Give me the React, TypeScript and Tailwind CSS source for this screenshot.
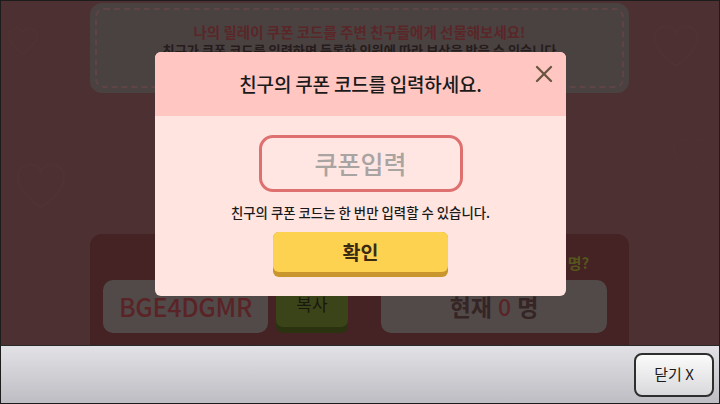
import { X } from 'lucide-react';

const Heart = ({ className }: { className: string }) => (
  <svg viewBox="0 0 60 56" className={className} fill="none" stroke="#5a3a3b" strokeWidth="3">
    <path d="M30 52 C10 38 4 28 4 18 C4 9 11 4 18 4 C24 4 28 8 30 12 C32 8 36 4 42 4 C49 4 56 9 56 18 C56 28 50 38 30 52 Z" />
  </svg>
);

export default function App() {
  return (
    <div
      className="w-[720px] h-[404px] flex flex-col overflow-hidden border border-[#1c1c1c] bg-[#4d3031]"
      style={{ fontFamily: '"Noto Sans CJK KR", "Noto Sans", sans-serif' }}
    >
      {/* 배경 (딤 처리된 화면) */}
      <div className="relative flex-1 overflow-hidden">
        <Heart className="absolute left-[6px] top-[14px] w-[32px] h-[52px] opacity-25" />
        <Heart className="absolute left-[10px] top-[160px] w-[60px] h-[50px] opacity-20" />
        <Heart className="absolute right-[18px] top-[22px] w-[50px] h-[46px] opacity-20" />
        <Heart className="absolute right-[8px] top-[130px] w-[40px] h-[50px] opacity-15" />

        <div className="flex flex-col items-start pl-[89px] pt-[2px]">
          {/* 상단 안내 박스 */}
          <div className="w-[539px] h-[90px] rounded-[12px] bg-[#4a4241] p-[5px]">
            <div className="h-full rounded-[9px] border-2 border-dashed border-[#5e4445] flex flex-col items-center pt-[11px]">
              <p className="text-[14.5px] font-bold text-[#5a2628] leading-[21px]">
                나의 릴레이 쿠폰 코드를 주변 친구들에게 선물해보세요!
              </p>
              <p className="text-[13.2px] font-bold text-[#261c1c] leading-[18px]">
                친구가 쿠폰 코드를 입력하면 등록한 인원에 따라 보상을 받을 수 있습니다
              </p>
            </div>
          </div>

          {/* 하단 코드 박스 */}
          <div className="mt-[141px] w-[539px] h-[130px] rounded-[12px] bg-[#452223] flex pl-[13px] pt-[20px] gap-[33px]">
            <div className="flex flex-col items-center gap-[8px]">
              <p className="text-[15px] font-bold text-[#6a5e5e] leading-[18px]">나의 릴레이 쿠폰 코드</p>
              <div className="flex gap-[8px]">
                <div className="w-[165px] h-[53px] rounded-[10px] bg-[#524a49] flex items-center justify-center text-[25px] font-medium text-[#5a2427] tracking-[-0.3px]">
                  BGE4DGMR
                </div>
                <div className="w-[72px] h-[53px] rounded-[7px] bg-[#2b3210] pb-[6px]">
                  <div className="h-full rounded-[7px] bg-[#3b4419] flex items-center justify-center text-[17px] text-[#18180c]">
                    복사
                  </div>
                </div>
              </div>
            </div>
            <div className="flex flex-col items-center gap-[8px]">
              <p className="text-[15px] font-bold text-[#55561d] leading-[18px]">내 코드를 등록한 친구는 몇 명?</p>
              <div className="w-[226px] h-[53px] rounded-[10px] bg-[#524a49] flex items-center justify-center gap-[6px] text-[23px] font-bold text-[#352525]">
                현재 <span className="text-[#5a2427] font-medium">0</span> 명
              </div>
            </div>
          </div>
        </div>

        {/* 쿠폰 입력 모달 */}
        <div className="absolute left-[154px] top-[51px] w-[411px] h-[244px] rounded-[6px] overflow-hidden bg-[#ffe4e0] flex flex-col">
          <div className="relative h-[64px] bg-[#ffc6c2] flex items-center justify-center">
            <p className="text-[19px] font-medium text-[#1a1a1a] tracking-[-0.2px]">친구의 쿠폰 코드를 입력하세요.</p>
            <X className="absolute right-[8px] top-[8px] w-[28px] h-[28px] text-[#6b5640]" strokeWidth={2} />
          </div>
          <div className="flex flex-col items-center pt-[19px]">
            <div className="w-[204px] h-[57px] rounded-[14px] border-[3px] border-[#df7070] bg-[#ffe6e2] flex items-center justify-center">
              <span className="text-[25px] font-medium text-[#a9a3a2]">쿠폰입력</span>
            </div>
            <p className="mt-[11px] text-[13.4px] font-medium text-[#1a1a1a] leading-[18px]">
              친구의 쿠폰 코드는 한 번만 입력할 수 있습니다.
            </p>
            <div className="mt-[11px] w-[175px] h-[45px] rounded-[6px] bg-[#c9952d] pb-[5px]">
              <div className="h-full rounded-[6px] bg-[#fdd250] flex items-center justify-center text-[19.5px] font-bold text-[#3b2a12]">
                확인
              </div>
            </div>
          </div>
        </div>
      </div>

      {/* 하단 바 */}
      <div className="h-[58px] border-t border-[#2a2a2a] bg-gradient-to-b from-[#e2e2e6] to-[#bebdc3] flex items-center justify-end pr-[5px]">
        <button className="w-[80px] h-[44px] rounded-[8px] border-2 border-[#2e2e2e] bg-gradient-to-b from-[#fbfbfb] to-[#d9d9dc] text-[15px] text-[#1a1a1a]">
          닫기 X
        </button>
      </div>
    </div>
  );
}
